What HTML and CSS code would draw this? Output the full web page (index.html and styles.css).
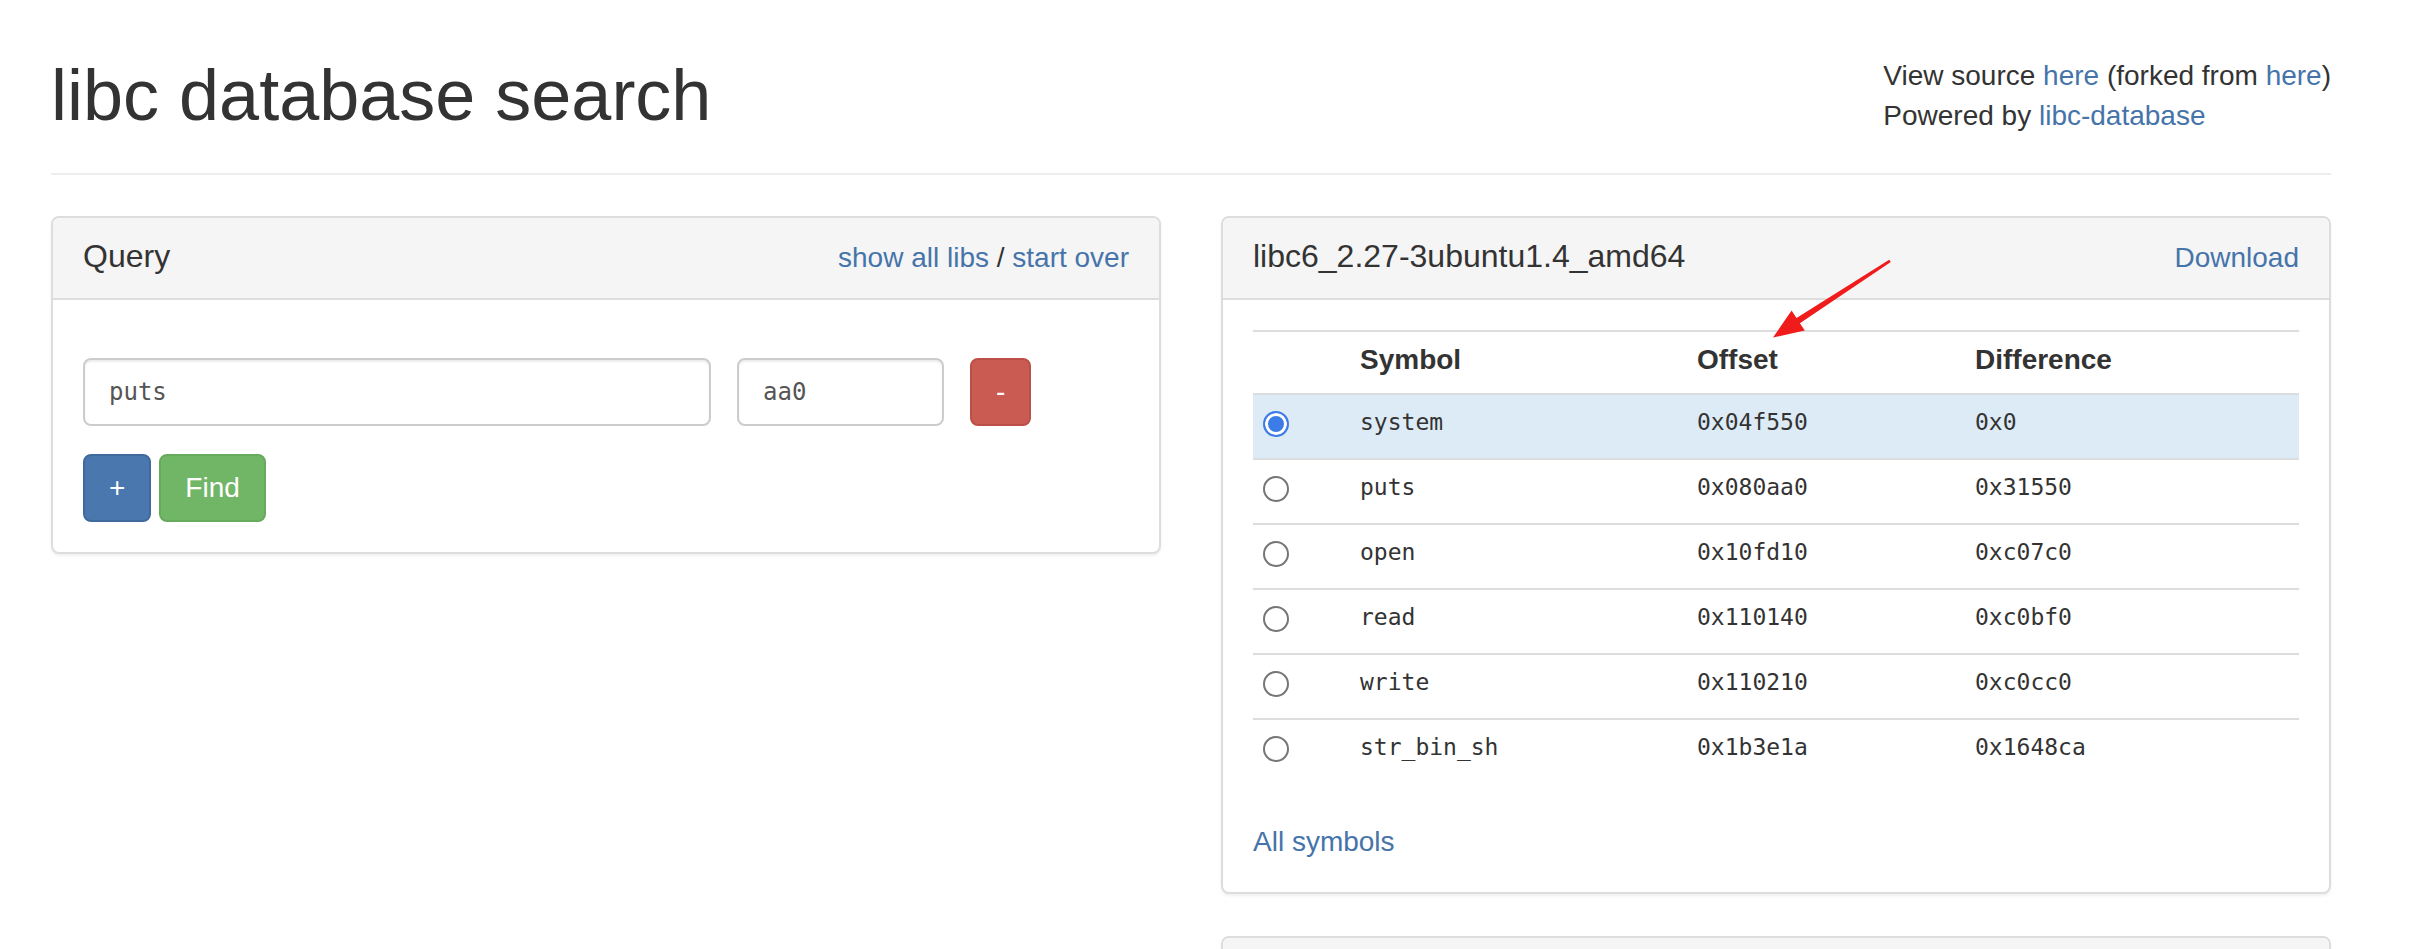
FILE: index.html
```html
<!DOCTYPE html>
<html lang="en">
<head>
<meta charset="utf-8">
<title>libc database search</title>
<link rel="stylesheet" href="styles.css">
</head>
<body>
<div class="container">
  <header class="page-header">
    <h1 class="title">libc database search</h1>
    <div class="about">
      <div>View source <a href="#">here</a> (forked from <a href="#">here</a>)</div>
      <div>Powered by <a href="#">libc-database</a></div>
    </div>
  </header>

  <div class="columns">
    <section class="panel query-panel">
      <div class="panel-heading">
        <h3 class="panel-title">Query</h3>
        <div class="heading-links"><a href="#">show all libs</a> / <a href="#">start over</a></div>
      </div>
      <div class="panel-body">
        <div class="query-form">
          <div class="form-row">
            <input class="form-control symbol-input" type="text" value="puts">
            <input class="form-control addr-input" type="text" value="aa0">
            <button class="btn btn-danger" type="button">-</button>
          </div>
          <div class="form-row buttons-row">
            <button class="btn btn-primary" type="button">+</button>
            <button class="btn btn-success" type="button">Find</button>
          </div>
        </div>
      </div>
    </section>

    <div class="results">
      <section class="panel">
        <div class="panel-heading">
          <h3 class="panel-title">libc6_2.27-3ubuntu1.4_amd64</h3>
          <div class="heading-links"><a href="#">Download</a></div>
        </div>
        <div class="panel-body">
          <table class="table">
            <colgroup>
              <col class="c-radio">
              <col class="c-symbol">
              <col class="c-offset">
              <col class="c-diff">
            </colgroup>
            <thead>
              <tr><th></th><th>Symbol</th><th>Offset</th><th>Difference</th></tr>
            </thead>
            <tbody>
              <tr class="info">
                <td class="radio-cell"><input class="radio" type="radio" name="sym" checked></td>
                <td>system</td><td>0x04f550</td><td>0x0</td>
              </tr>
              <tr>
                <td class="radio-cell"><input class="radio" type="radio" name="sym"></td>
                <td>puts</td><td>0x080aa0</td><td>0x31550</td>
              </tr>
              <tr>
                <td class="radio-cell"><input class="radio" type="radio" name="sym"></td>
                <td>open</td><td>0x10fd10</td><td>0xc07c0</td>
              </tr>
              <tr>
                <td class="radio-cell"><input class="radio" type="radio" name="sym"></td>
                <td>read</td><td>0x110140</td><td>0xc0bf0</td>
              </tr>
              <tr>
                <td class="radio-cell"><input class="radio" type="radio" name="sym"></td>
                <td>write</td><td>0x110210</td><td>0xc0cc0</td>
              </tr>
              <tr>
                <td class="radio-cell"><input class="radio" type="radio" name="sym"></td>
                <td>str_bin_sh</td><td>0x1b3e1a</td><td>0x1648ca</td>
              </tr>
            </tbody>
          </table>
          <a class="all-symbols" href="#">All symbols</a>
        </div>
      </section>

      <section class="panel next-panel">
        <div class="panel-heading">
          <h3 class="panel-title">&nbsp;</h3>
        </div>
      </section>
    </div>
  </div>

  <svg class="annotation" width="140" height="100" viewBox="0 0 140 100" aria-hidden="true">
    <polygon points="130.8,12 39.9,73.3 44.8,80.6 13,87.5 31.6,60.6 36.5,67.9 129.2,9.8" fill="#f01c1c"/>
  </svg>
</div>
</body>
</html>
```

FILE: styles.css
```css
* {
  box-sizing: border-box;
}

html, body {
  margin: 0;
  padding: 0;
  background: #fff;
}

body {
  font-family: "Liberation Sans", Arial, Helvetica, sans-serif;
  font-size: 28px;
  line-height: 40px;
  color: #333;
  overflow: hidden;
}

a {
  color: #4674aa;
  text-decoration: none;
}

.container {
  position: relative;
  width: 2280px;
  margin-left: 51px;
  padding-top: 56px;
}

/* ---------- header ---------- */
.page-header {
  display: flex;
  justify-content: space-between;
  align-items: flex-start;
  padding-bottom: 37px;
  border-bottom: 2px solid #eee;
  margin-bottom: 41px;
}

.title {
  margin: 0;
  font-size: 72px;
  line-height: 79px;
  font-weight: normal;
  color: #333;
}

.about {
  text-align: left;
  white-space: nowrap;
}

/* ---------- columns ---------- */
.columns {
  display: flex;
  gap: 60px;
  align-items: flex-start;
}

.query-panel,
.results {
  width: 1110px;
}

.results {
  display: flex;
  flex-direction: column;
  gap: 42px;
}

/* ---------- panels ---------- */
.panel {
  background: #fff;
  border: 2px solid #ddd;
  border-radius: 8px;
  box-shadow: 0 2px 3px rgba(0, 0, 0, 0.06);
}

.panel-heading {
  display: flex;
  justify-content: space-between;
  align-items: baseline;
  padding: 19px 30px 21px;
  background: #f5f5f5;
  border-bottom: 2px solid #ddd;
  border-radius: 6px 6px 0 0;
}

.panel-title {
  margin: 0;
  font-size: 32px;
  line-height: 39px;
  font-weight: normal;
  color: #333;
}

.heading-links {
  font-size: 28px;
  line-height: 39px;
}

.panel-body {
  padding: 30px;
}

/* ---------- query form ---------- */
.query-form {
  display: flex;
  flex-direction: column;
  gap: 28px;
  padding-top: 28px;
}

.form-row {
  display: flex;
  gap: 26px;
  align-items: center;
}

.buttons-row {
  gap: 8px;
}

.form-control {
  height: 68px;
  padding: 0 24px;
  border: 2px solid #ccc;
  border-radius: 8px;
  box-shadow: inset 0 2px 2px rgba(0, 0, 0, 0.075);
  background: #fff;
  font-family: "DejaVu Sans Mono", monospace;
  font-size: 24px;
  color: #555;
  outline: none;
}

.symbol-input {
  width: 628px;
}

.addr-input {
  width: 207px;
}

.btn {
  height: 68px;
  padding: 12px 24px;
  border: 2px solid transparent;
  border-radius: 8px;
  font-family: "Liberation Sans", Arial, sans-serif;
  font-size: 28px;
  line-height: 40px;
  color: #fff;
  cursor: pointer;
}

.btn-danger {
  background: #c95b53;
  border-color: #bc4f48;
}

.btn-primary {
  background: #4a77ad;
  border-color: #3f6a9e;
}

.btn-success {
  background: #71b566;
  border-color: #66aa5b;
}

/* ---------- table ---------- */
.table {
  width: 100%;
  table-layout: fixed;
  border-collapse: separate;
  border-spacing: 0;
  margin-bottom: 39px;
}

.c-radio { width: 91px; }
.c-symbol { width: 337px; }
.c-offset { width: 278px; }
.c-diff { width: 340px; }

.table th {
  text-align: left;
  font-weight: bold;
  font-size: 28px;
  line-height: 40px;
  padding: 8px 16px 13px;
  border-top: 2px solid #ddd;
  color: #333;
}

.table td {
  padding: 7px 16px 16px;
  border-top: 2px solid #ddd;
  font-family: "DejaVu Sans Mono", monospace;
  font-size: 23px;
  line-height: 40px;
  color: #333;
  vertical-align: top;
}

.table td.radio-cell {
  padding: 16px 0 0 10px;
}

.table tr.info td {
  background: #ddebf6;
}

.radio {
  display: block;
  width: 26px;
  height: 26px;
  margin: 0;
  appearance: none;
  -webkit-appearance: none;
  border: 2px solid #767676;
  border-radius: 50%;
  background: #fff;
}

.radio:checked {
  border-color: #3d7ce6;
  background: #3d7ce6;
  box-shadow: inset 0 0 0 3px #fff;
}

.all-symbols {
  display: block;
}

.next-panel .panel-heading {
  border-bottom: none;
}

/* ---------- annotation ---------- */
.annotation {
  position: absolute;
  left: 1709px;
  top: 250px;
}
```
